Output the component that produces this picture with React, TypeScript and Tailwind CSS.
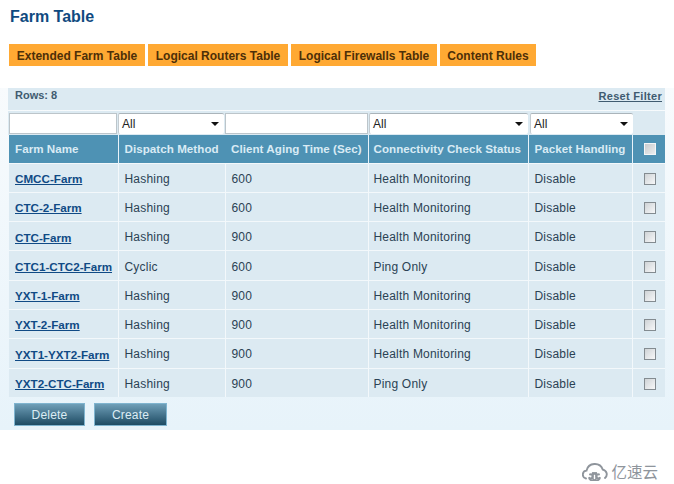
const rows = [
  ["CMCC-Farm", "Hashing", "600", "Health Monitoring"],
  ["CTC-2-Farm", "Hashing", "600", "Health Monitoring"],
  ["CTC-Farm", "Hashing", "900", "Health Monitoring"],
  ["CTC1-CTC2-Farm", "Cyclic", "600", "Ping Only"],
  ["YXT-1-Farm", "Hashing", "900", "Health Monitoring"],
  ["YXT-2-Farm", "Hashing", "900", "Health Monitoring"],
  ["YXT1-YXT2-Farm", "Hashing", "900", "Health Monitoring"],
  ["YXT2-CTC-Farm", "Hashing", "900", "Ping Only"],
]

const tabs = [
  { label: "Extended Farm Table", w: "w-[136px]" },
  { label: "Logical Routers Table", w: "w-[140px]" },
  { label: "Logical Firewalls Table", w: "w-[146px]" },
  { label: "Content Rules", w: "w-[96px]" },
]

function FakeSelect({ w }: { w: string }) {
  return (
    <div className={`flex h-[21px] items-center justify-between rounded-[2px] border-t border-l border-t-[#aab4ba] border-l-[#c4ccd1] bg-white pr-[4px] pl-[3px] text-[12px] text-[#222] ${w}`}>
      <span>All</span>
      <svg width="8" height="4" viewBox="0 0 8 4" className="mr-[1px]">
        <path d="M0 0h8L4 4z" fill="#111" />
      </svg>
    </div>
  )
}

function Check({ light }: { light?: boolean }) {
  return (
    <span
      className={`block h-[12px] w-[12px] border bg-gradient-to-br ${
        light ? "border-[#f4f6f7] from-[#c9ccce] to-[#eceeef]" : "border-[#838b90] from-[#cfd3d6] to-[#f7f8f9]"
      }`}
    />
  )
}

function ActionButton({ label, w }: { label: string; w: string }) {
  return (
    <button className={`h-[23px] border border-[#7fb4cf] bg-gradient-to-b from-[#6f9fb8] to-[#1e4c64] text-[12px] tracking-[0.2px] text-[#dcecf4] ${w}`}>
      {label}
    </button>
  )
}

export default function App() {
  return (
    <div className="h-[484px] w-[674px] overflow-hidden bg-white font-['Liberation_Sans',Arial,sans-serif]">
      <h1 className="pt-[7px] pl-[10px] text-[16px] leading-[20px] font-bold text-[#0f4a80]">Farm Table</h1>

      <div className="mt-[17px] flex gap-[3px] pl-[9px]">
        {tabs.map((t) => (
          <div key={t.label} className={`flex h-[22px] items-center justify-center bg-[#ffa933] pt-px text-[12px] font-bold text-[#4d2f08] ${t.w}`}>
            {t.label}
          </div>
        ))}
      </div>

      <div className="mt-[22px] h-[342px] bg-gradient-to-b from-[#f8fbfd] to-[#e7f3fa] pl-[8px]">
        <div className="flex h-[22px] w-[657px] items-start justify-between bg-[#dceaf2] pr-[3px] pl-[7px] text-[11px] leading-[14px] font-bold text-[#3f5b70]">
          <span>Rows: 8</span>
          <span className="mt-px tracking-[0.3px] underline">Reset Filter</span>
        </div>

        <div className="mt-px flex h-[24px] w-[657px] items-center gap-[1px] bg-[#dceaf2] pl-[1px]">
          <div className="h-[21px] w-[108px] border border-[#bcc5ca] bg-white" />
          <FakeSelect w="w-[106px]" />
          <div className="h-[21px] w-[143px] border border-[#bcc5ca] bg-white" />
          <FakeSelect w="w-[159px]" />
          <div className="ml-px">
            <FakeSelect w="w-[103px]" />
          </div>
        </div>

        <table className="ml-px w-[656px] table-fixed border-collapse text-[12px] tracking-[0.2px]">
          <colgroup>
            <col className="w-[109px]" />
            <col className="w-[107px]" />
            <col className="w-[143px]" />
            <col className="w-[160px]" />
            <col className="w-[104px]" />
            <col className="w-[33px]" />
          </colgroup>
          <thead>
            <tr className="h-[28px] bg-[#4e92b4] text-left text-[11.6px] tracking-[0.05px] whitespace-nowrap text-[#d9ebf4]">
              <th className="pl-[6px] font-bold">Farm Name</th>
              <th className="border-l border-[#e8f3fa] pl-[6px] font-bold">Dispatch Method</th>
              <th className="pl-[6px] font-bold">Client Aging Time (Sec)</th>
              <th className="border-l border-[#e8f3fa] pl-[5px] font-bold">Connectivity Check Status</th>
              <th className="border-l border-[#e8f3fa] pl-[6px] font-bold">Packet Handling</th>
              <th className="border-l border-[#e8f3fa] pl-[11px]">
                <Check light />
              </th>
            </tr>
          </thead>
          <tbody className="text-[#2b4254]">
            {rows.map((r) => (
              <tr key={r[0]} className="h-[29.3px] border-t border-[#f3f8fb] bg-[#dceaf2]">
                <td className="pt-[2px] pl-[6px] text-[11.65px] font-bold tracking-normal whitespace-nowrap text-[#104a85] underline">{r[0]}</td>
                <td className="border-l border-[#f3f8fb] pt-[2px] pl-[6px]">{r[1]}</td>
                <td className="border-l border-[#f3f8fb] pt-[2px] pl-[6px]">{r[2]}</td>
                <td className="border-l border-[#f3f8fb] pt-[2px] pl-[5px]">{r[3]}</td>
                <td className="border-l border-[#f3f8fb] pt-[2px] pl-[6px]">Disable</td>
                <td className="border-l border-[#f3f8fb] pt-[2px] pl-[11px]">
                  <Check />
                </td>
              </tr>
            ))}
          </tbody>
        </table>

        <div className="mt-[6px] flex gap-[9px] pl-[6px]">
          <ActionButton label="Delete" w="w-[71px]" />
          <ActionButton label="Create" w="w-[73px]" />
        </div>
      </div>

      <div className="mt-[32px] flex items-center justify-end gap-[3px] pr-[16px] text-[#8f959c]">
        {/* cloud mark: outline plus two spirals */}
        <svg width="26" height="19" viewBox="0 0 26 19" fill="none" stroke="#8f959c" strokeWidth="1.9" strokeLinecap="round">
          <path d="M4 16.5A4 4 0 0 1 4.5 8.6 8.5 8.5 0 0 1 20.8 7.6 4.8 4.8 0 0 1 23 16" />
          <path d="M8 12.5a2 2 0 1 1-1 2.8 3.8 3.8 0 1 0 3.8-4.3" />
          <path d="M17 12.5a2 2 0 1 0 1 2.8 3.8 3.8 0 1 1-3.8-4.3" />
        </svg>
        <span className="font-['Noto_Sans_CJK_SC',sans-serif] text-[15.5px] leading-[19px]">亿速云</span>
      </div>
    </div>
  )
}
